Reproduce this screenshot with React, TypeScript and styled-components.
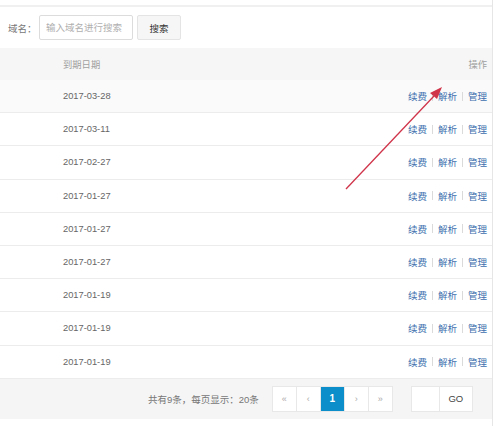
import * as React from "react";
import styled, { createGlobalStyle } from "styled-components";

const GlobalStyle = createGlobalStyle`
  html, body {
    margin: 0;
    padding: 0;
    background: #fff;
    font-family: "Liberation Sans", Arial, "Noto Sans CJK SC", sans-serif;
    color: #666;
  }
`;

const rows = [
  "2017-03-28",
  "2017-03-11",
  "2017-02-27",
  "2017-01-27",
  "2017-01-27",
  "2017-01-27",
  "2017-01-19",
  "2017-01-19",
  "2017-01-19",
];

const Page = styled.div`
  position: relative;
  width: 493px;
  height: 426px;
  padding-top: 5px;
  box-sizing: border-box;
  border-right: 1px solid #e6e6e6;
`;

const SearchBar = styled.div`
  display: flex;
  align-items: center;
  height: 41px;
  padding: 0 0 0 8px;
  border-top: 2px solid #f0f0f0;
  font-size: 9.5px;
`;

const Label = styled.span`
  width: 31px;
  white-space: nowrap;
  color: #777;
`;

const SearchInput = styled.input`
  width: 94px;
  height: 25px;
  box-sizing: border-box;
  border: 1px solid #dcdcdc;
  border-radius: 2px;
  padding: 0 6px;
  font-size: 9.5px;
  font-family: inherit;
  outline: none;
  &::placeholder {
    color: #b0b0b0;
  }
`;

const SearchButton = styled.button`
  width: 44px;
  height: 25px;
  margin-left: 4px;
  box-sizing: border-box;
  border: 1px solid #e4e4e4;
  background: #f6f6f6;
  color: #333;
  font-size: 9.5px;
  font-family: inherit;
  border-radius: 2px;
`;

const HeadRow = styled.div`
  display: flex;
  align-items: center;
  height: 32px;
  background: #f6f6f6;
  font-size: 9.3px;
  color: #a0a0a0;
`;

const Row = styled.div<{ $tint?: boolean }>`
  display: flex;
  align-items: center;
  height: 33.2px;
  box-sizing: border-box;
  border-bottom: 1px solid #ececec;
  background: ${(p) => (p.$tint ? "#fafafa" : "#fff")};
  font-size: 9.3px;
  color: #666;
`;

const DateCell = styled.div`
  padding-left: 63px;
  flex: 1;
`;

const ActionCell = styled.div`
  display: flex;
  align-items: center;
  padding-right: 5px;
  gap: 5px;
`;

const Link = styled.span`
  color: #3d6fae;
  font-size: 9.5px;
`;

const Sep = styled.span`
  width: 1px;
  height: 9px;
  background: #dadada;
`;

const Footer = styled.div`
  display: flex;
  align-items: center;
  height: 40px;
  background: #f5f5f5;
  font-size: 9.5px;
  color: #777;
  padding-left: 148px;
`;

const Pager = styled.div`
  display: flex;
  margin-left: 14px;
`;

const PageBox = styled.span<{ $active?: boolean }>`
  width: 25px;
  height: 26px;
  box-sizing: border-box;
  display: flex;
  align-items: center;
  justify-content: center;
  border: 1px solid #e8e8e8;
  margin-left: -1px;
  background: ${(p) => (p.$active ? "#0b8ec9" : "#fff")};
  color: ${(p) => (p.$active ? "#fff" : "#aaa")};
  font-size: ${(p) => (p.$active ? "10px" : "9px")};
  font-weight: ${(p) => (p.$active ? "bold" : "normal")};
`;

const GoGroup = styled.div`
  display: flex;
  margin-left: 18px;
`;

const GoInput = styled.span`
  width: 29px;
  height: 26px;
  box-sizing: border-box;
  border: 1px solid #e8e8e8;
  background: #fff;
`;

const GoButton = styled.span`
  width: 33px;
  height: 26px;
  box-sizing: border-box;
  display: flex;
  align-items: center;
  justify-content: center;
  border: 1px solid #e8e8e8;
  border-left: none;
  background: #fff;
  color: #444;
  font-size: 9.5px;
`;

const Arrow = styled.svg`
  position: absolute;
  left: 0;
  top: 0;
  pointer-events: none;
`;

export default function App() {
  return (
    <Page>
      <GlobalStyle />
      <SearchBar>
        <Label>域名：</Label>
        <SearchInput placeholder="输入域名进行搜索" />
        <SearchButton>搜索</SearchButton>
      </SearchBar>
      <HeadRow>
        <DateCell>到期日期</DateCell>
        <ActionCell>操作</ActionCell>
      </HeadRow>
      {rows.map((d, i) => (
        <Row key={i} $tint={i === 0}>
          <DateCell>{d}</DateCell>
          <ActionCell>
            <Link>续费</Link>
            <Sep />
            <Link>解析</Link>
            <Sep />
            <Link>管理</Link>
          </ActionCell>
        </Row>
      ))}
      <Footer>
        共有9条，每页显示：20条
        <Pager>
          <PageBox>«</PageBox>
          <PageBox>‹</PageBox>
          <PageBox $active>1</PageBox>
          <PageBox>›</PageBox>
          <PageBox>»</PageBox>
        </Pager>
        <GoGroup>
          <GoInput />
          <GoButton>GO</GoButton>
        </GoGroup>
      </Footer>
      <Arrow width="496" height="426">
        <line x1="346" y1="189" x2="434" y2="96" stroke="#d0344a" strokeWidth="1.3" />
        <polygon points="442,87 430,93 437,99" fill="#d0344a" />
      </Arrow>
    </Page>
  );
}
